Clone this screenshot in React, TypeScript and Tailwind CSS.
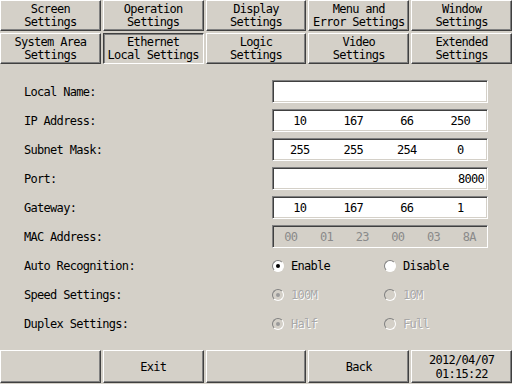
import React from "react";

const font = { fontFamily: '"DejaVu Sans Mono", "Liberation Mono", monospace' };

const raised =
  "border border-t-white border-l-white border-r-[#404040] border-b-[#404040] shadow-[inset_-1px_-1px_0_#808080]";
const sunkenBtn =
  "border border-t-[#404040] border-l-[#404040] border-r-white border-b-white shadow-[inset_1px_1px_0_#808080]";
const sunkenField =
  "border border-t-[#808080] border-l-[#808080] border-r-white border-b-white shadow-[inset_1px_1px_0_#404040,inset_-1px_-1px_0_#d4d0c8]";

const tabs: [string, string, boolean][] = [
  ["Screen", "Settings", false],
  ["Operation", "Settings", false],
  ["Display", "Settings", false],
  ["Menu and", "Error Settings", false],
  ["Window", "Settings", false],
  ["System Area", "Settings", false],
  ["Ethernet", "Local Settings", true],
  ["Logic", "Settings", false],
  ["Video", "Settings", false],
  ["Extended", "Settings", false],
];

const Field = ({ values, disabled, right }: { values: string[]; disabled?: boolean; right?: boolean }) => (
  <div
    className={`ml-[248px] w-[216px] h-[23px] flex items-center ${sunkenField} ${
      disabled ? "bg-[#d4d0c8] text-[#8a8a8a]" : "bg-white text-black"
    } ${right ? "justify-end pr-[3px]" : ""}`}
  >
    {values.map((v, i) => (
      <span key={i} className={right ? "" : "flex-1 text-center"}>
        {v}
      </span>
    ))}
  </div>
);

const Radio = ({ label, checked, disabled }: { label: string; checked?: boolean; disabled?: boolean }) => (
  <div className="w-[112px] flex items-center gap-[7px]">
    <span
      className={`w-[12px] h-[12px] rounded-full flex items-center justify-center border border-t-[#808080] border-l-[#808080] border-r-white border-b-white ${
        disabled ? "bg-[#d4d0c8]" : "bg-white"
      }`}
    >
      {checked && (
        <span className={`w-[4px] h-[4px] rounded-full ${disabled ? "bg-[#9a9a9a]" : "bg-black"}`} />
      )}
    </span>
    <span className={disabled ? "text-[#a8a8a8] [text-shadow:1px_1px_0_#fff]" : "text-black"}>{label}</span>
  </div>
);

const rows: { label: string; body: React.ReactNode }[] = [
  { label: "Local Name:", body: <Field values={[]} /> },
  { label: "IP Address:", body: <Field values={["10", "167", "66", "250"]} /> },
  { label: "Subnet Mask:", body: <Field values={["255", "255", "254", "0"]} /> },
  { label: "Port:", body: <Field values={["8000"]} right /> },
  { label: "Gateway:", body: <Field values={["10", "167", "66", "1"]} /> },
  { label: "MAC Address:", body: <Field values={["00", "01", "23", "00", "03", "8A"]} disabled /> },
  {
    label: "Auto Recognition:",
    body: (
      <div className="ml-[248px] flex">
        <Radio label="Enable" checked />
        <Radio label="Disable" />
      </div>
    ),
  },
  {
    label: "Speed Settings:",
    body: (
      <div className="ml-[248px] flex">
        <Radio label="100M" checked disabled />
        <Radio label="10M" disabled />
      </div>
    ),
  },
  {
    label: "Duplex Settings:",
    body: (
      <div className="ml-[248px] flex">
        <Radio label="Half" checked disabled />
        <Radio label="Full" disabled />
      </div>
    ),
  },
];

export default function App() {
  return (
    <div
      className="w-[512px] h-[384px] bg-[#d4d0c8] text-black text-[12px] tracking-[-0.7px] flex flex-col overflow-hidden"
      style={font}
    >
      {/* tab buttons */}
      <div className="grid grid-cols-5 gap-x-[2px] gap-y-[2px]">
        {tabs.map(([a, b, sel], i) => (
          <div
            key={i}
            className={`h-[31px] flex flex-col items-center justify-center leading-[13px] ${sel ? sunkenBtn : raised}`}
          >
            <span>{a}</span>
            <span>{b}</span>
          </div>
        ))}
      </div>

      {/* settings */}
      <div className="flex-1 pt-[13px]">
        {rows.map((r) => (
          <div key={r.label} className="h-[29px] flex items-center relative">
            <span className="absolute left-[24px]">{r.label}</span>
            <div className="ml-[24px]">{r.body}</div>
          </div>
        ))}
      </div>

      {/* bottom bar */}
      <div className="grid grid-cols-5 gap-x-[2px] mb-[1px]">
        <div className={`h-[33px] ${raised}`} />
        <div className={`h-[33px] flex items-center justify-center ${raised}`}>Exit</div>
        <div className={`h-[33px] ${raised}`} />
        <div className={`h-[33px] flex items-center justify-center ${raised}`}>Back</div>
        <div className={`h-[33px] flex flex-col items-center justify-center leading-[14px] ${raised}`}>
          <span>2012/04/07</span>
          <span>01:15:22</span>
        </div>
      </div>
    </div>
  );
}
